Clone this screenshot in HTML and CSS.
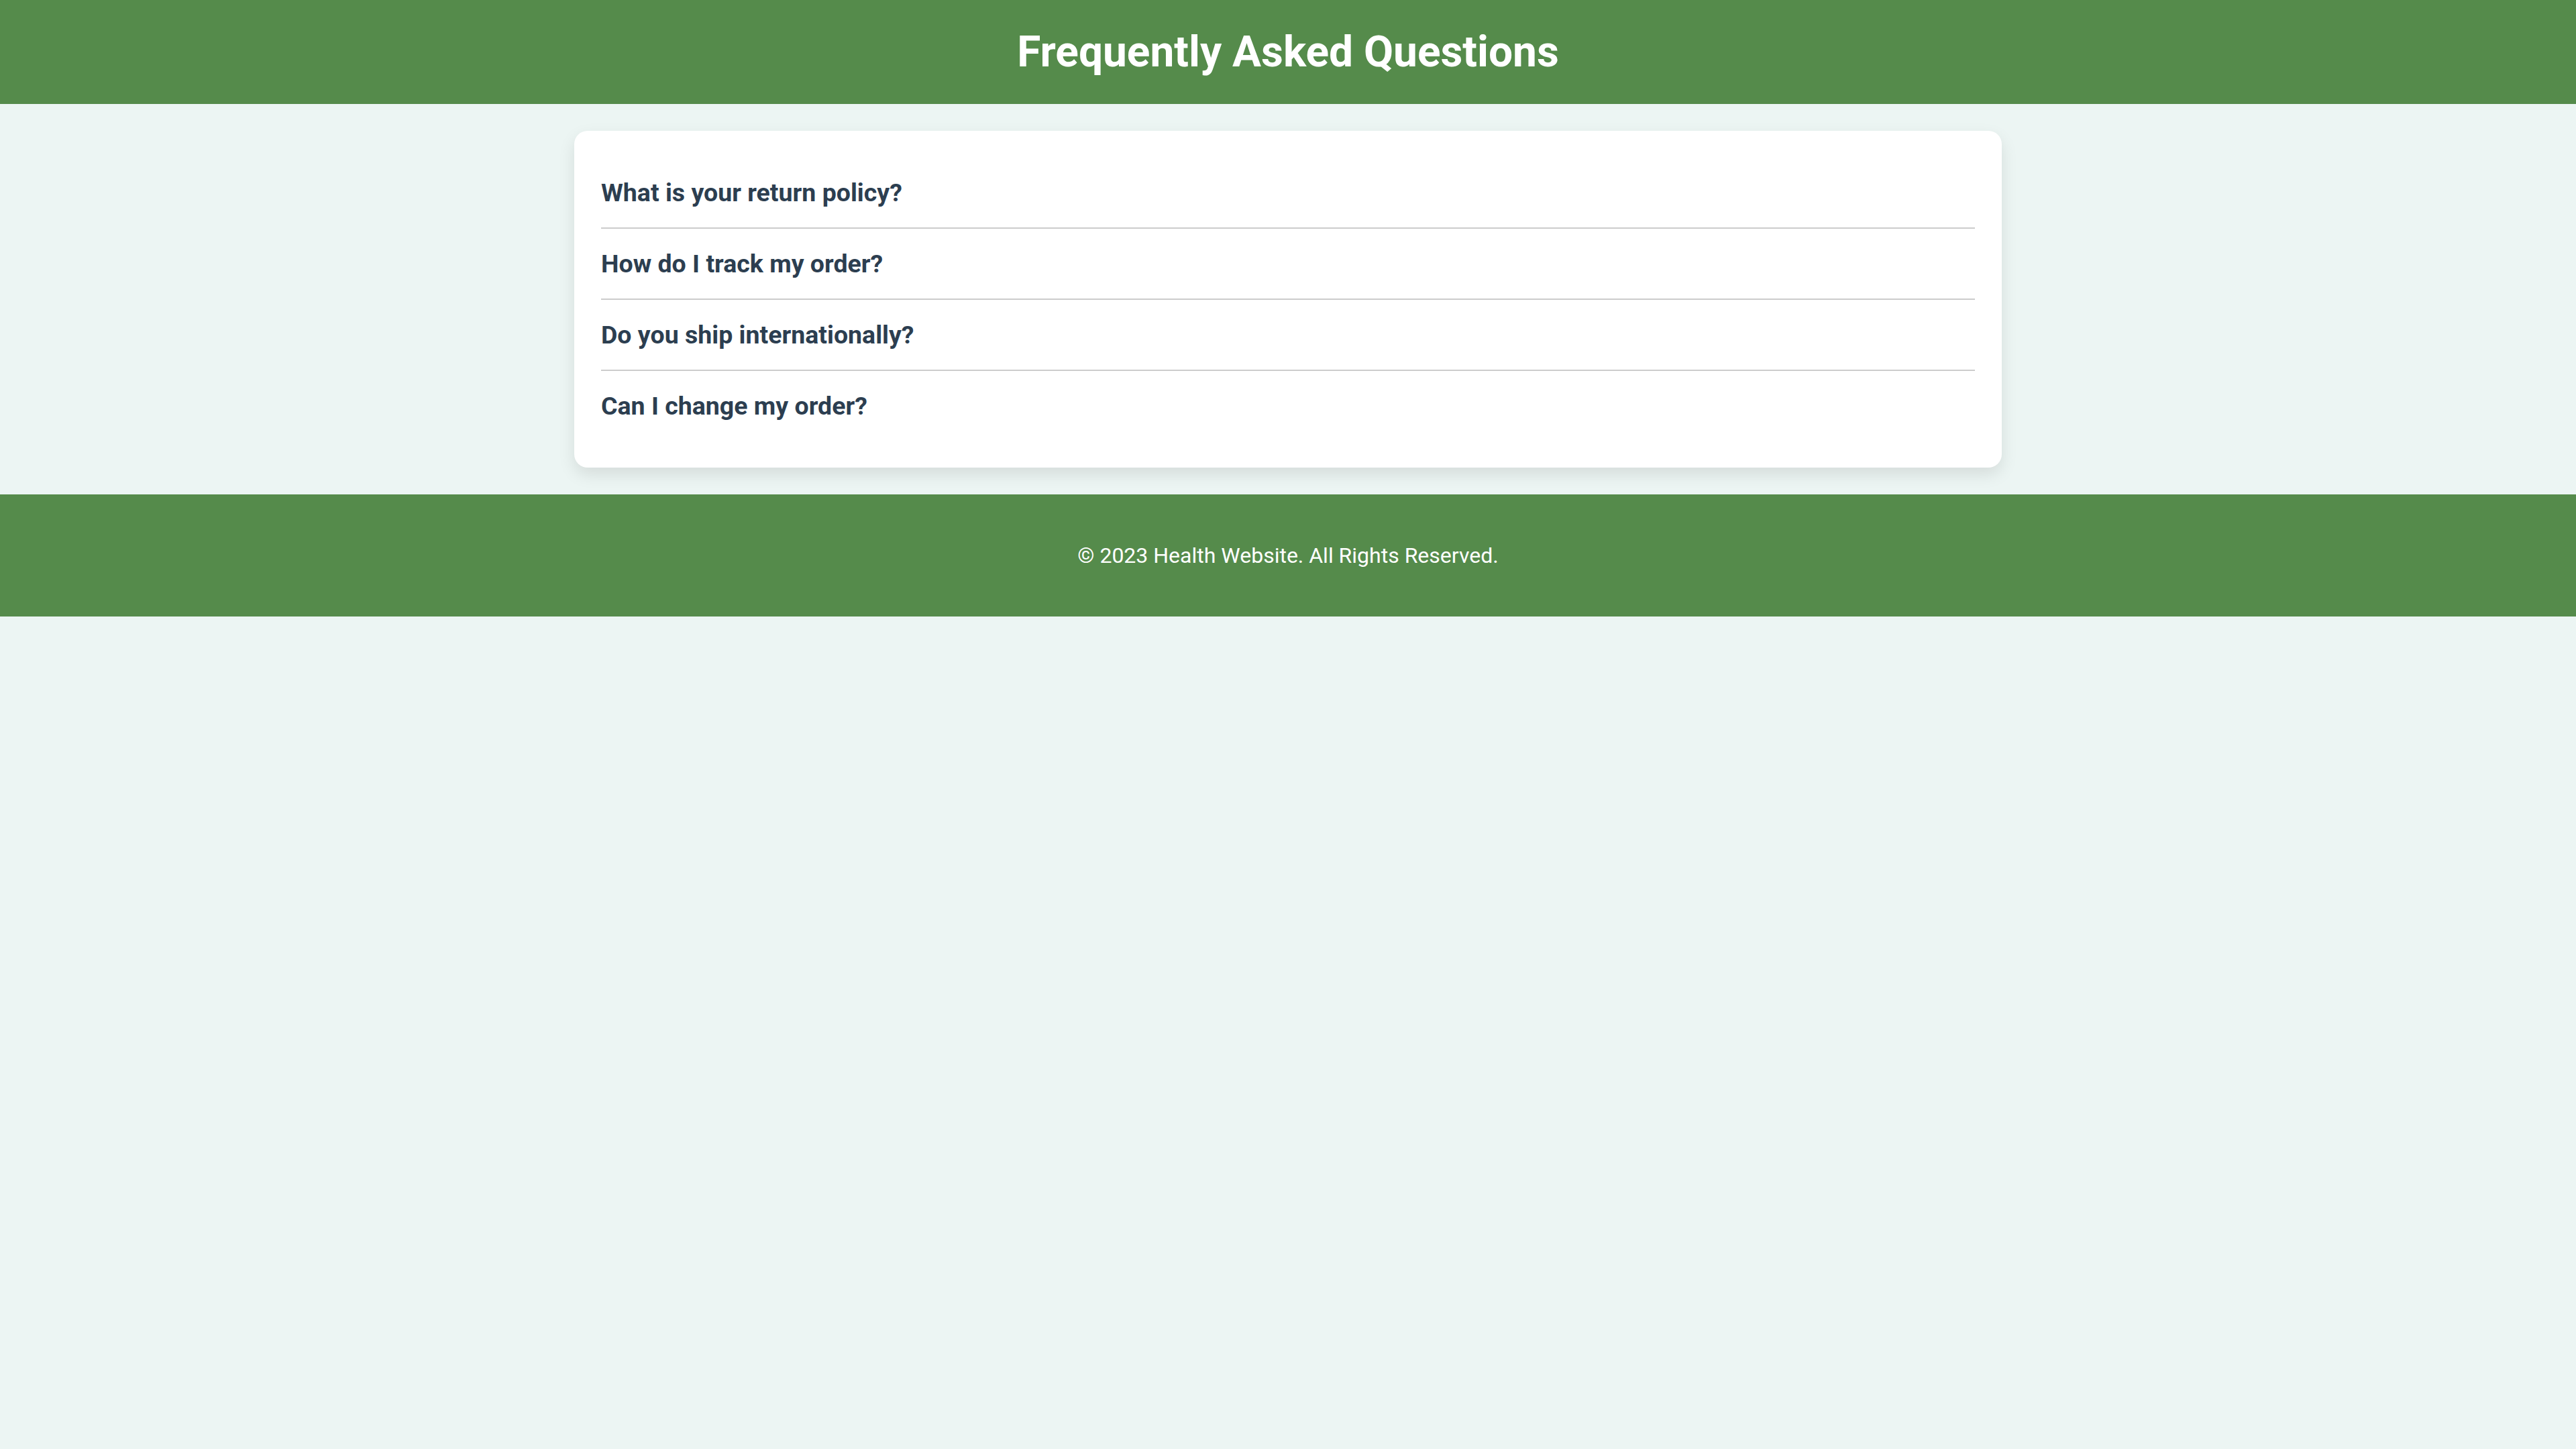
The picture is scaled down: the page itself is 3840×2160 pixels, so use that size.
FILE: index.html
```html
<!DOCTYPE html>
<html lang="en">
<head>
<meta charset="utf-8">
<title>Frequently Asked Questions</title>
<link rel="stylesheet" href="styles.css">
</head>
<body>
<header class="site-header">
  <h1 class="site-title">Frequently Asked Questions</h1>
</header>
<main class="faq-card">
  <div class="faq-item"><h3 class="faq-question">What is your return policy?</h3></div>
  <div class="faq-item"><h3 class="faq-question">How do I track my order?</h3></div>
  <div class="faq-item"><h3 class="faq-question">Do you ship internationally?</h3></div>
  <div class="faq-item"><h3 class="faq-question">Can I change my order?</h3></div>
</main>
<footer class="site-footer">
  <p class="footer-text">© 2023 Health Website. All Rights Reserved.</p>
</footer>
</body>
</html>
```
FILE: styles.css
```css
html, body {
  margin: 0;
  padding: 0;
}
body {
  background: #ecf5f3;
  font-family: Roboto, "Liberation Sans", Arial, sans-serif;
  color: #2c3e50;
  min-height: 2160px;
}
.site-header {
  background: #558b4b;
  padding: 40px 0 40px;
  text-align: center;
}
.site-title {
  margin: 0;
  color: #ffffff;
  font-size: 64px;
  font-weight: 700;
  line-height: 75px;
}
.faq-card {
  display: block;
  width: 2048px;
  margin: 40px auto;
  padding: 40px;
  background: #ffffff;
  border-radius: 20px;
  box-shadow: 0 10px 25px rgba(0, 0, 0, 0.1);
}
.faq-item {
  padding: 30px 0;
  border-bottom: 2px solid #cccccc;
}
.faq-item:last-child {
  border-bottom: none;
}
.faq-question {
  margin: 0;
  font-size: 37.5px;
  font-weight: 700;
  line-height: normal;
  color: #2c3e50;
}
.site-footer {
  background: #558b4b;
  padding: 73px 0 71.5px;
  text-align: center;
}
.footer-text {
  margin: 0;
  color: #ffffff;
  font-size: 32px;
  line-height: 37.5px;
}
```
